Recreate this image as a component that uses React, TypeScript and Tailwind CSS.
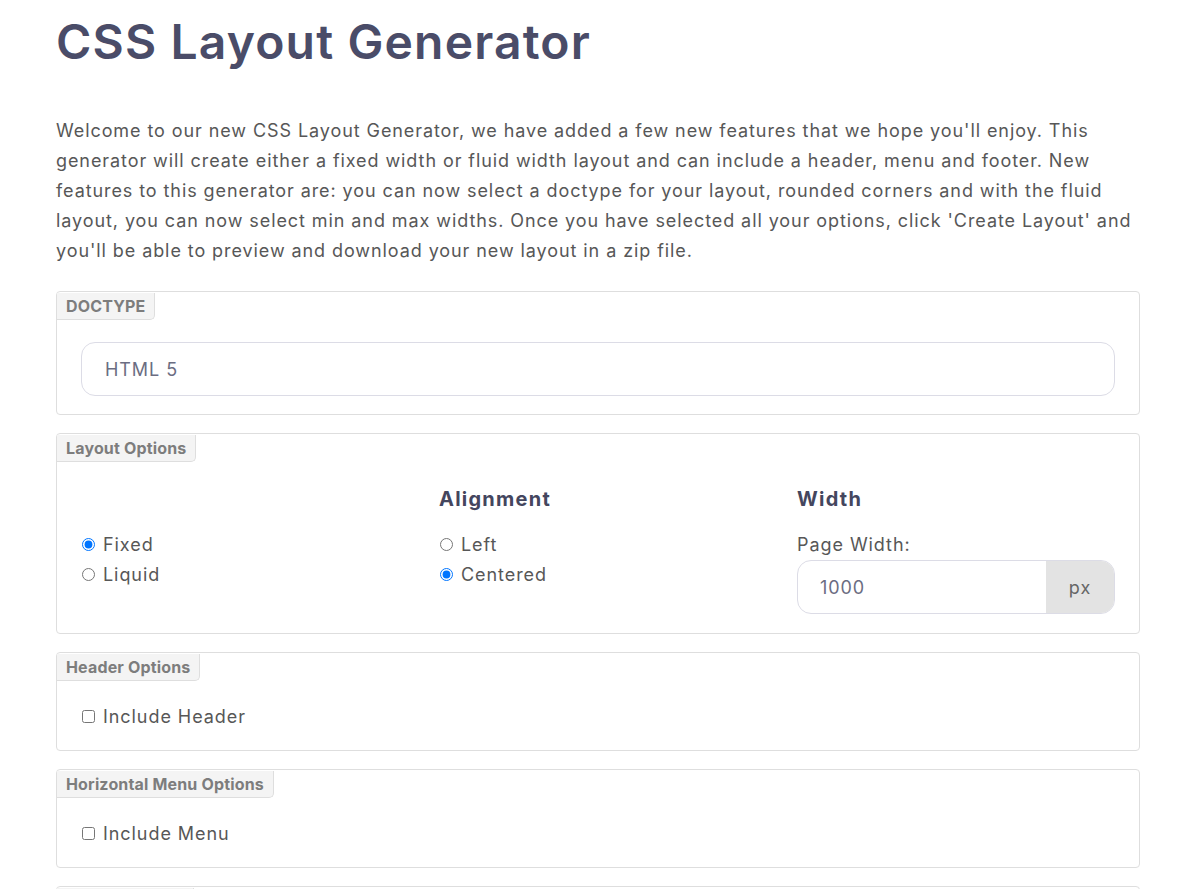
import React from "react";

function Legend({ children }: { children: React.ReactNode }) {
  return (
    <div className="inline-block rounded-br-[5px] border-r border-b border-[#dedede] bg-[#f4f4f4] px-[9px] py-[4px] text-[16px] leading-[18px] font-bold tracking-[0.01em] text-[#7d7d7d]">
      {children}
    </div>
  );
}

function Card({ title, children }: { title: string; children: React.ReactNode }) {
  return (
    <fieldset className="mb-[18px] rounded-[4px] border border-[#dedede]">
      <Legend>{title}</Legend>
      {children}
    </fieldset>
  );
}

function Radio({ label, checked, name }: { label: string; checked?: boolean; name: string }) {
  return (
    <label className="flex h-[30px] items-center">
      <input
        type="radio"
        name={name}
        defaultChecked={checked}
        className="m-0 mr-[8px] ml-[1px] h-[13px] w-[13px] accent-[#0075ff]"
      />
      <span>{label}</span>
    </label>
  );
}

function Check({ label }: { label: string }) {
  return (
    <label className="flex h-[30px] items-center">
      <input type="checkbox" className="m-0 mr-[8px] ml-[1px] h-[13px] w-[13px]" />
      <span>{label}</span>
    </label>
  );
}

export default function App() {
  return (
    <div
      className="min-h-screen bg-white px-[56px] text-[18px] tracking-[0.052em] text-[#575757]"
      style={{ fontFamily: "Inter, 'Noto Sans', sans-serif" }}
    >
      <div className="w-[1084px]">
        <h1 className="pt-[13px] text-[48px] leading-[58px] font-semibold tracking-[0.024em] text-[#4a4c68]">
          CSS Layout Generator
        </h1>
        <p className="mt-[45px] mb-[25px] text-[18px] leading-[30px] tracking-[0.051em]">
          Welcome to our new CSS Layout Generator, we have added a few new features that we hope you'll enjoy. This
          generator will create either a fixed width or fluid width layout and can include a header, menu and footer.
          New features to this generator are: you can now select a doctype for your layout, rounded corners and with
          the fluid layout, you can now select min and max widths. Once you have selected all your options, click
          'Create Layout' and you'll be able to preview and download your new layout in a zip file.
        </p>

        <Card title="DOCTYPE">
          <div className="px-6 pt-[22px] pb-[18px]">
            <div className="flex h-[54px] items-center rounded-[14px] border border-[#dcdce6] px-[23px] text-[#6b6d82]">
              HTML 5
            </div>
          </div>
        </Card>

        <Card title="Layout Options">
          <div className="grid grid-cols-3 gap-x-[40px] px-6 pt-[23px] pb-[19px]">
            <div>
              <div className="h-[28px]" />
              <div className="mt-[16px]">
                <Radio name="type" label="Fixed" checked />
                <Radio name="type" label="Liquid" />
              </div>
            </div>
            <div>
              <h3 className="text-[20px] leading-[28px] font-bold tracking-[0.062em] text-[#44465e]">Alignment</h3>
              <div className="mt-[16px]">
                <Radio name="align" label="Left" />
                <Radio name="align" label="Centered" checked />
              </div>
            </div>
            <div>
              <h3 className="text-[20px] leading-[28px] font-bold tracking-[0.062em] text-[#44465e]">Width</h3>
              <div className="mt-[17px] leading-[30px]">Page Width:</div>
              <div className="flex h-[54px] overflow-hidden rounded-[14px] border border-[#dcdce6]">
                <div className="flex flex-1 items-center px-[22px] text-[#6b6d82]">1000</div>
                <div className="flex w-[68px] items-center justify-center bg-[#e3e3e3] text-[#666]">px</div>
              </div>
            </div>
          </div>
        </Card>

        <Card title="Header Options">
          <div className="px-6 pt-[20px] pb-[19px]">
            <Check label="Include Header" />
          </div>
        </Card>

        <Card title="Horizontal Menu Options">
          <div className="px-6 pt-[20px] pb-[19px]">
            <Check label="Include Menu" />
          </div>
        </Card>

        <Card title="Footer Options">
          <div className="px-6 pt-[20px] pb-[19px]">
            <Check label="Include Footer" />
          </div>
        </Card>
      </div>
    </div>
  );
}
